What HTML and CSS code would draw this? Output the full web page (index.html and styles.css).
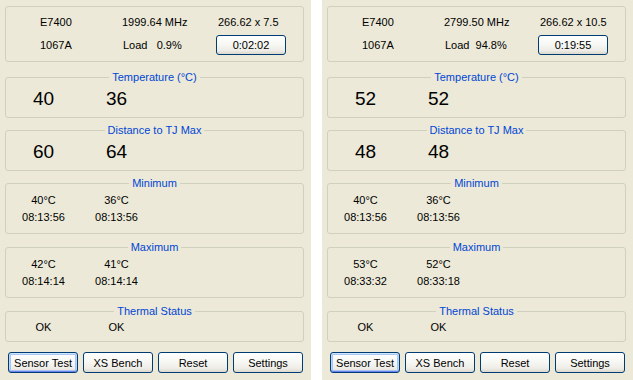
FILE: index.html
```html
<!DOCTYPE html>
<html>
<head>
<meta charset="utf-8">
<title>RealTemp</title>
<link rel="stylesheet" href="styles.css">
</head>
<body>
<div class="screen">
  <section class="panel">
    <div class="info">
      <span class="c1">E7400</span>
      <span class="c2">1999.64 MHz</span>
      <span class="c3">266.62 x 7.5</span>
      <span class="c1 mid">1067A</span>
      <span class="c2 mid load">Load&nbsp;&nbsp;&nbsp;0.9%</span>
      <span class="c3b"><span class="timer">0:02:02</span></span>
    </div>
    <fieldset class="group big first"><legend>Temperature (°C)</legend>
      <div class="cols"><span>40</span><span>36</span></div>
    </fieldset>
    <fieldset class="group big"><legend>Distance to TJ Max</legend>
      <div class="cols"><span>60</span><span>64</span></div>
    </fieldset>
    <fieldset class="group small"><legend>Minimum</legend>
      <div class="cols"><span>40°C</span><span>36°C</span><span>08:13:56</span><span>08:13:56</span></div>
    </fieldset>
    <fieldset class="group small wide"><legend>Maximum</legend>
      <div class="cols"><span>42°C</span><span>41°C</span><span>08:14:14</span><span>08:14:14</span></div>
    </fieldset>
    <fieldset class="group status wide"><legend>Thermal Status</legend>
      <div class="cols"><span>OK</span><span>OK</span></div>
    </fieldset>
    <div class="buttons">
      <button class="btn default">Sensor Test</button>
      <button class="btn">XS Bench</button>
      <button class="btn">Reset</button>
      <button class="btn">Settings</button>
    </div>
  </section>

  <section class="panel">
    <div class="info">
      <span class="c1">E7400</span>
      <span class="c2">2799.50 MHz</span>
      <span class="c3">266.62 x 10.5</span>
      <span class="c1 mid">1067A</span>
      <span class="c2 mid load">Load&nbsp;&nbsp;94.8%</span>
      <span class="c3b"><span class="timer">0:19:55</span></span>
    </div>
    <fieldset class="group big first"><legend>Temperature (°C)</legend>
      <div class="cols"><span>52</span><span>52</span></div>
    </fieldset>
    <fieldset class="group big"><legend>Distance to TJ Max</legend>
      <div class="cols"><span>48</span><span>48</span></div>
    </fieldset>
    <fieldset class="group small"><legend>Minimum</legend>
      <div class="cols"><span>40°C</span><span>36°C</span><span>08:13:56</span><span>08:13:56</span></div>
    </fieldset>
    <fieldset class="group small wide"><legend>Maximum</legend>
      <div class="cols"><span>53°C</span><span>52°C</span><span>08:33:32</span><span>08:33:18</span></div>
    </fieldset>
    <fieldset class="group status wide"><legend>Thermal Status</legend>
      <div class="cols"><span>OK</span><span>OK</span></div>
    </fieldset>
    <div class="buttons">
      <button class="btn default">Sensor Test</button>
      <button class="btn">XS Bench</button>
      <button class="btn">Reset</button>
      <button class="btn">Settings</button>
    </div>
  </section>
</div>
</body>
</html>
```

FILE: styles.css
```css
html, body {
  margin: 0;
  padding: 0;
  background: #ffffff;
}

body {
  font-family: "Liberation Sans", Arial, sans-serif;
  font-size: 11px;
  color: #000000;
}

.screen {
  display: flex;
  gap: 11px;
  width: 633px;
  height: 380px;
}

.panel {
  width: 311px;
  height: 380px;
  flex: none;
  box-sizing: border-box;
  background: #ece9d8;
  padding: 6px 7px 0 5px;
  display: flex;
  flex-direction: column;
}

/* top info box */
.info {
  height: 56px;
  box-sizing: border-box;
  border: 1px solid #d0d0bf;
  border-radius: 3px;
  padding: 9px 0 6px 34px;
  display: grid;
  grid-template-columns: 82px 94px 1fr;
  grid-template-rows: 13px 20px;
  row-gap: 6px;
  line-height: 13px;
  white-space: nowrap;
}

.info .mid {
  align-self: center;
}

.info .c2 {
  padding-left: 0;
}

.info .load {
  padding-left: 1px;
}

.info .c3 {
  padding-left: 2px;
}

.timer {
  display: block;
  width: 70px;
  height: 20px;
  box-sizing: border-box;
  border: 1px solid #003c74;
  border-radius: 3px;
  text-align: center;
  line-height: 18px;
  background: linear-gradient(#ffffff 0%, #f7f7f4 45%, #eeede7 80%, #dcd8cc 100%);
}

/* group boxes */
.group {
  margin: 6px 0 0 0;
  padding: 5px 0 8px 0;
  border: 1px solid #d0d0bf;
  border-radius: 3px;
  min-width: 0;
}

.group.first {
  margin-top: 9px;
}

.group.wide {
  margin-top: 7px;
}

.group legend {
  margin: 0 auto;
  padding: 0 3px;
  font-size: 11px;
  line-height: 13px;
  color: #0046d5;
}

.cols {
  display: grid;
  grid-template-columns: 75px 71px;
  text-align: center;
  white-space: nowrap;
}

.big .cols {
  font-size: 19px;
  line-height: 20px;
}

.small {
  padding: 4px 0 9px 0;
}

.small .cols {
  line-height: 13px;
  row-gap: 4px;
}

.status {
  padding: 3px 0 7px 0;
}

.status .cols {
  line-height: 13px;
}

/* bottom buttons */
.buttons {
  display: flex;
  gap: 5px;
  margin-top: 10px;
  padding-left: 3px;
}

.btn {
  width: 70px;
  height: 21px;
  box-sizing: border-box;
  margin: 0;
  padding: 0;
  border: 1px solid #003c74;
  border-radius: 3px;
  font-family: "Liberation Sans", Arial, sans-serif;
  font-size: 11px;
  color: #000000;
  background: linear-gradient(#ffffff 0%, #f7f7f4 45%, #eeede7 80%, #dcd8cc 100%);
}

.btn.default {
  box-shadow: inset 0 1px 0 #cee7ff, inset 0 -1px 0 #6982ee,
    inset 1px 0 0 #bcd4f6, inset -1px 0 0 #bcd4f6,
    inset 0 0 0 2px #a9c4f5;
}
```
